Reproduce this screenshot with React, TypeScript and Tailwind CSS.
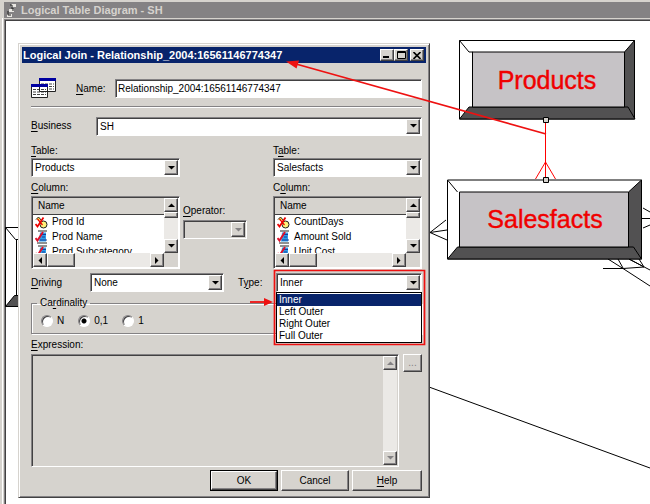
import React, { useState } from 'react'
import clsx from 'clsx'

const raised = 'border border-t-white border-l-white border-b-[#424142] border-r-[#424142] bg-[#d6d3ce] shadow-[inset_-1px_-1px_#848284]'
const sunken = 'border border-t-[#848284] border-l-[#848284] border-b-white border-r-white p-px shadow-[inset_1px_1px_#424142]'
const track = 'bg-[#ebe9e6]'

type Direction = 'up' | 'down' | 'left' | 'right'

const arrows: Record<Direction, string> = {
    up: 'M0 4h7L3.500 0.500z',
    down: 'M0 0h7L3.500 3.500z',
    left: 'M4 0v7L0.500 3.500z',
    right: 'M0 0v7L3.500 3.500z',
}

function Arrow({ direction, muted }: { direction: Direction; muted?: boolean }) {
    const flat = direction === 'up' || direction === 'down'
    return (
        <svg width={flat ? 7 : 4} height={flat ? 4 : 7} fill={muted ? '#848284' : '#000'} aria-hidden="true">
            <path d={arrows[direction]} />
        </svg>
    )
}

function ScrollButton({ direction, muted }: { direction: Direction; muted?: boolean }) {
    return (
        <button
            type="button"
            aria-label={`Scroll ${direction}`}
            disabled={muted}
            className={clsx(raised, 'flex size-[14px] shrink-0 items-center justify-center')}
        >
            <Arrow direction={direction} muted={muted} />
        </button>
    )
}

type ComboProps = {
    id: string
    value: string
    options: string[]
    disabled?: boolean
    onChange?: (value: string) => void
}

function Combo({ id, value, options, disabled, onChange }: ComboProps) {
    return (
        <div className={clsx(sunken, 'grid h-[19px] w-full', disabled ? 'bg-[#d6d3ce]' : 'bg-white')}>
            <select
                id={id}
                value={value}
                disabled={disabled}
                onChange={(e) => onChange?.(e.target.value)}
                className="col-start-1 row-start-1 h-[15px] w-full appearance-none bg-transparent pl-[2px] leading-[15px] outline-none"
            >
                {options.map((option) => (
                    <option key={option}>{option}</option>
                ))}
            </select>
            <span className={clsx(raised, 'pointer-events-none col-start-1 row-start-1 flex h-[15px] w-[14px] items-center justify-center justify-self-end')}>
                <Arrow direction="down" muted={disabled} />
            </span>
        </div>
    )
}

function KeyIcon() {
    return (
        <svg width="13" height="13" viewBox="0 0 13 13" aria-hidden="true">
            <path d="M1 3.500L3.500 1l3.500 4" stroke="#222" fill="#ffe94a" />
            <circle cx="8.500" cy="8.500" r="3.500" fill="#fff27a" stroke="#222" />
            <path d="M2.500 3l5 6" stroke="#e00" strokeWidth="1.200" />
            <path d="M0.500 8l2 2.500L8.500 1.500" stroke="#e00" strokeWidth="1.800" fill="none" />
        </svg>
    )
}

function FieldIcon() {
    return (
        <svg width="13" height="14" viewBox="0 0 13 14" aria-hidden="true">
            <path d="M3 1h9M2 13h10" stroke="#222" />
            <path d="M5 2.500h6v9H4z" fill="#2c9de8" />
            <path d="M7 4.500h4M7 7h3M5 10h7" stroke="#1a3c9c" />
            <path d="M0.500 8l2 2.500L8 2" stroke="#e0102a" strokeWidth="2" fill="none" />
        </svg>
    )
}

type ColumnListProps = { columns: string[]; label: string }

function ColumnList({ columns, label }: ColumnListProps) {
    return (
        <div className={clsx(sunken, 'h-[73px] w-full bg-white')} role="group" aria-labelledby={label}>
            <div className="flex h-[55px]">
                <div className="h-full min-w-0 flex-1 overflow-hidden">
                    <table className="w-full border-collapse">
                        <thead>
                            <tr className="h-4">
                                <th className="border-b border-[#424142] bg-[#d6d3ce] p-0 pl-[5px] text-left leading-[15px] font-normal">Name</th>
                            </tr>
                        </thead>
                        <tbody>
                            {columns.map((column, i) => (
                                <tr key={column} className="h-[15px]">
                                    <td className="p-0 pl-[2px]">
                                        <span className="flex h-[15px] items-center gap-1 whitespace-nowrap">
                                            {i === 0 ? <KeyIcon /> : <FieldIcon />}
                                            {column}
                                        </span>
                                    </td>
                                </tr>
                            ))}
                        </tbody>
                    </table>
                </div>
                <div className={clsx(track, 'flex w-[14px] flex-col')}>
                    <ScrollButton direction="up" />
                    <div className={clsx(raised, 'h-[6px]')} />
                    <div className="flex-1" />
                    <ScrollButton direction="down" />
                </div>
            </div>
            <div className="flex h-[14px] bg-[#d6d3ce] pr-[14px]">
                <ScrollButton direction="left" />
                <div className={clsx(raised, 'w-7')} />
                <div className={clsx(track, 'flex-1')} />
                <ScrollButton direction="right" />
            </div>
        </div>
    )
}

function JoinIcon() {
    return (
        <svg width="25" height="21" viewBox="0 0 25 21" aria-hidden="true">
            <path d="M8.500 0.500h16v13h-16z" fill="#fff" stroke="#222" />
            <path d="M8 0h17v3H8z" fill="#0000a0" />
            <path d="M10 6h13M10 8.500h13M10 11h13" stroke="#444" strokeDasharray="3 1" />
            <path d="M0.500 6.500h16v13h-16z" fill="#fff" stroke="#222" />
            <path d="M0 6h17v3H0z" fill="#0000a0" />
            <path d="M2 11.500h13M2 14h13M2 16.500h13" stroke="#444" strokeDasharray="3 1" />
            <path d="M8.500 9v4.500h8" stroke="#222" fill="none" />
        </svg>
    )
}

// underlines the access key of a label
function Hot({ text, at = 0 }: { text: string; at?: number }) {
    return (
        <>
            {text.slice(0, at)}
            <span className="underline underline-offset-2">{text[at]}</span>
            {text.slice(at + 1)}
        </>
    )
}

function Diagram() {
    return (
        <svg className="pointer-events-none absolute inset-0 h-full w-full" fontFamily="Liberation Sans, Arial, sans-serif" fontSize="25">
            <g stroke="#000" fill="none">
                <path d="M429 387l221 81" />
                <path d="M446 220l-16 12.500 17-2.500M430 232.500l17 7.500" />
                <path d="M643 208l7 4M641 218.500h9M643 228l7-3" />
                <path d="M603 268.500h20l21-1.500M608 259l15 9.500L650 286M618 259l5 9M629 259l21 11M629 259l15 8M639 259l5 8" />
            </g>
            {/* left node, mostly behind the dialog */}
            <g stroke="#000">
                <path d="M5.500 227.500H30v79H5.500z" fill="#fff" />
                <path d="M5.500 306.500l9-11H30v11z" fill="#525152" />
                <path d="M5.500 227.500l10 12H30M16.500 239.500v56" fill="none" />
            </g>
            {/* Products */}
            <g stroke="#000">
                <path d="M459.500 40.500h175v78.500h-175z" fill="#fff" />
                <path d="M634.500 40.500l-10 11.500v55l10 12z" fill="#525152" />
                <path d="M459.500 119l9.500-12h159l7 12z" fill="#525152" />
                <path d="M472.500 52h152v55h-152z" fill="#c6c3c6" />
                <path d="M459.500 40.500l9.500 11.500h4" fill="none" />
            </g>
            <text x="547" y="89" textAnchor="middle" fill="#f00000" stroke="#f00000" strokeWidth="0.400">Products</text>
            {/* Salesfacts */}
            <g stroke="#000">
                <path d="M447.500 180h194v79h-194z" fill="#fff" />
                <path d="M641.500 180l-13 12v55l13 12z" fill="#525152" />
                <path d="M447.500 259l10-12h176l8 12z" fill="#525152" />
                <path d="M459.500 192h169v55h-169z" fill="#c6c3c6" />
                <path d="M447.500 180l10 12" fill="none" />
            </g>
            <text x="545" y="228" textAnchor="middle" fill="#f00000" stroke="#f00000" strokeWidth="0.400">Salesfacts</text>
            <path d="M545.500 120v60M545.500 162l-10 17M545.500 162l10 17" stroke="#f00" fill="none" />
            <path d="M543.500 117.500h5v5h-5zM543.500 177.500h5v5h-5z" fill="#d6d3ce" stroke="#000" />
        </svg>
    )
}

function Annotations() {
    return (
        <svg className="pointer-events-none absolute inset-0 h-full w-full" aria-hidden="true">
            <path d="M546 134L296 64" stroke="#ee1111" strokeWidth="1.800" />
            <path d="M286 61.500l13-1-2.500 8z" fill="#ee1111" />
            <path d="M274.500 270.500h150v74h-150z" stroke="#ee1111" strokeWidth="1.700" fill="none" />
            <path d="M250 302h16" stroke="#ee1111" strokeWidth="1.800" />
            <path d="M264 298l9 4-9 4z" fill="#ee1111" />
        </svg>
    )
}

function JoinDialog() {
    const [name, setName] = useState('Relationship_2004:16561146774347')
    const [type, setType] = useState('Inner')
    const [cardinality, setCardinality] = useState('0,1')
    const types = ['Inner', 'Left Outer', 'Right Outer', 'Full Outer']

    return (
        <section
            role="dialog"
            aria-labelledby="join-title"
            className="absolute top-[43px] left-[18px] w-[412px] border border-t-[#d6d3ce] border-r-[#424142] border-b-[#424142] border-l-[#d6d3ce] bg-[#d6d3ce] p-[3px] pb-[6px] shadow-[inset_1px_1px_#fff,inset_-1px_-1px_#848284]"
        >
            <header className="flex h-4 items-center justify-between bg-[#08246b] pr-[2px] pl-px text-white">
                <h2 id="join-title" className="text-[11px] leading-4 font-bold whitespace-nowrap">
                    Logical Join - Relationship_2004:16561146774347
                </h2>
                <div className="flex text-black">
                    <button type="button" aria-label="Minimize" className={clsx(raised, 'flex h-3 w-[14px] items-end justify-center pb-px')}>
                        <svg width="8" height="3"><path d="M0 0h6v2H0z" /></svg>
                    </button>
                    <button type="button" aria-label="Maximize" className={clsx(raised, 'flex h-3 w-[14px] items-center justify-center')}>
                        <svg width="9" height="8" fill="none" stroke="#000"><path d="M0.500 0.500h8v7h-8zM0 1.500h9" /></svg>
                    </button>
                    <button type="button" aria-label="Close" className={clsx(raised, 'ml-[2px] flex h-3 w-[14px] items-center justify-center')}>
                        <svg width="8" height="7" stroke="#000" strokeWidth="1.600"><path d="M0.500 0l7 7M7.500 0l-7 7" /></svg>
                    </button>
                </div>
            </header>

            <form className="pr-1 pl-[9px]" onSubmit={(e) => e.preventDefault()}>
                <div className="mt-4 flex h-[19px] items-center">
                    <JoinIcon />
                    <label htmlFor="name" className="ml-5 w-[39px]"><Hot text="Name:" /></label>
                    <input
                        id="name"
                        value={name}
                        onChange={(e) => setName(e.target.value)}
                        className={clsx(sunken, 'h-[19px] min-w-0 flex-1 bg-white pl-[2px] outline-none')}
                    />
                </div>
                <hr className="mt-2 border-t border-b border-t-[#848284] border-b-white" />
                <div className="mt-2 flex h-5 items-center">
                    <label htmlFor="business" className="w-[65px] shrink-0"><Hot text="Business" /></label>
                    <Combo id="business" value="SH" options={['SH']} />
                </div>

                <div className="mt-2 grid grid-cols-[149px_1fr_149px]">
                    <div>
                        <label htmlFor="table-left" className="block"><Hot text="Table:" /></label>
                        <Combo id="table-left" value="Products" options={['Products']} />
                        <p id="columns-left" className="mt-1 mb-px"><Hot text="Column:" /></p>
                        <ColumnList label="columns-left" columns={['Prod Id', 'Prod Name', 'Prod Subcategory']} />
                    </div>
                    <div className="self-end pr-[26px] pb-[30px] pl-[3px]">
                        <label htmlFor="operator" className="mb-[2px] block"><Hot text="Operator:" /></label>
                        <Combo id="operator" value="" options={['']} disabled />
                    </div>
                    <div>
                        <label htmlFor="table-right" className="block"><Hot text="Table:" at={1} /></label>
                        <Combo id="table-right" value="Salesfacts" options={['Salesfacts']} />
                        <p id="columns-right" className="mt-1 mb-px"><Hot text="Column:" at={1} /></p>
                        <ColumnList label="columns-right" columns={['CountDays', 'Amount Sold', 'Unit Cost']} />
                    </div>
                </div>

                <div className="mt-1 flex h-[19px] items-center">
                    <label htmlFor="driving" className="w-[59px]"><Hot text="Driving" /></label>
                    <div className="w-[134px]">
                        <Combo id="driving" value="None" options={['None']} />
                    </div>
                    <label htmlFor="type" className="ml-[14px] w-[38px]"><Hot text="Type:" at={1} /></label>
                    <div className="relative flex-1">
                        <Combo id="type" value={type} options={types} onChange={setType} />
                        <ul role="listbox" aria-label="Type" className="absolute top-full left-0 z-10 w-full border border-black bg-white pt-px">
                            {types.map((option) => (
                                <li
                                    key={option}
                                    role="option"
                                    aria-selected={option === type}
                                    onClick={() => setType(option)}
                                    className={clsx('h-3 pl-[2px] leading-3', option === type && 'bg-[#08246b] text-white')}
                                >
                                    {option}
                                </li>
                            ))}
                        </ul>
                    </div>
                </div>

                <fieldset className="mt-1 border border-[#848284] px-[9px] pt-1 pb-[5px] shadow-[1px_1px_#fff,inset_1px_1px_#fff]">
                    <legend className="-ml-1 px-[3px] leading-[14px]"><Hot text="Cardinality" at={2} /></legend>
                    <div className="flex h-[14px] items-center">
                        {['N', '0,1', '1'].map((option) => (
                            <label key={option} className="mr-[14px] flex items-center gap-1">
                                <input
                                    type="radio"
                                    name="cardinality"
                                    checked={cardinality === option}
                                    onChange={() => setCardinality(option)}
                                    className="size-3 appearance-none rounded-full border border-t-[#848284] border-r-white border-b-white border-l-[#848284] bg-white shadow-[inset_1px_1px_#424142] checked:bg-[radial-gradient(circle,#000_2px,#fff_3px)]"
                                />
                                {option}
                            </label>
                        ))}
                    </div>
                </fieldset>

                <label htmlFor="expression" className="mt-1 mb-[2px] block"><Hot text="Expression:" /></label>
                <div className="flex items-start gap-1">
                    <div className={clsx(sunken, 'flex h-[113px] flex-1')}>
                        <textarea id="expression" disabled className="flex-1 resize-none outline-none" />
                        <div className={clsx(track, 'flex w-[14px] flex-col justify-between')}>
                            <ScrollButton direction="up" muted />
                            <ScrollButton direction="down" muted />
                        </div>
                    </div>
                    <button type="button" disabled className={clsx(raised, 'h-[18px] w-[19px] leading-3 text-[#848284]')}>...</button>
                </div>

                <div className="mt-[3px] flex justify-end gap-[3px]">
                    <button type="submit" className="h-[21px] w-[68px] border border-black">
                        <span className={clsx(raised, 'flex h-full items-center justify-center')}>OK</span>
                    </button>
                    <button type="button" className={clsx(raised, 'h-[21px] w-[68px]')}>Cancel</button>
                    <button type="button" className={clsx(raised, 'h-[21px] w-[70px]')}><Hot text="Help" /></button>
                </div>
            </form>
        </section>
    )
}

function App() {
    return (
        <main className="relative flex min-h-screen flex-col overflow-hidden bg-[#d6d3ce] pt-[2px] font-['Liberation_Sans',Arial,sans-serif] text-[10px] leading-[14px] text-black">
            <header className="ml-1 flex h-4 items-center gap-[5px] bg-[#848284] pl-[3px] text-[#d6d3ce]">
                <svg width="9" height="14" fill="none" aria-hidden="true">
                    <path d="M4 1h5v3H4zM2 6h5v3H2zM0 11h5v3H0z" fill="#e8e6e2" />
                    <path d="M3 2h2v4M6 5v3M1 8v4h3" stroke="#222" />
                </svg>
                <h1 className="text-[11px] font-bold">Logical Table Diagram - SH</h1>
            </header>
            <div className="ml-[2px] flex flex-1 border-l border-white">
                <div className="mt-px ml-px flex-1 border-t border-l border-[#848284]">
                    <div className="h-full border-t border-l border-[#424142] bg-white" />
                </div>
            </div>
            <Diagram />
            <JoinDialog />
            <Annotations />
        </main>
    )
}

export default App
